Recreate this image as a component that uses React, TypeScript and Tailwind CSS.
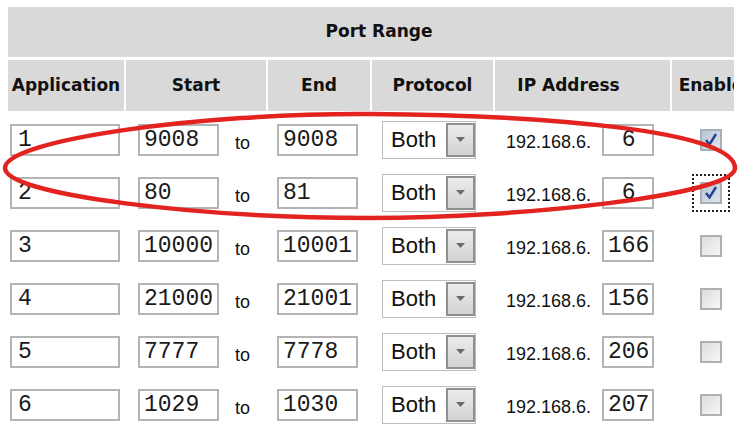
import React from 'react'

type Row = {
  app: string
  start: string
  end: string
  ip: string
  enabled?: boolean
  focused?: boolean
}

const rows: Row[] = [
  { app: '1', start: '9008', end: '9008', ip: ' 6', enabled: true },
  { app: '2', start: '80', end: '81', ip: ' 6', enabled: true, focused: true },
  { app: '3', start: '10000', end: '10001', ip: '166' },
  { app: '4', start: '21000', end: '21001', ip: '156' },
  { app: '5', start: '7777', end: '7778', ip: '206' },
  { app: '6', start: '1029', end: '1030', ip: '207' },
]

const headCell =
  "mt-[3px] flex h-[51px] items-center justify-center bg-[#d9d9da] text-[17px] font-bold text-[#111] font-['DejaVu_Sans',sans-serif]"

const field =
  "h-[32px] border-2 border-[#b4b4b4] bg-white pl-[4px] text-[23px] leading-none text-[#1a1a1a] outline-none font-['Liberation_Mono',monospace] whitespace-pre"

function Select() {
  return (
    <div className="flex h-[38px] w-[94px] items-stretch border border-[#bdbdbd] bg-white">
      <span className="flex flex-1 items-center pl-[8px] text-[22px] text-[#111] font-['Liberation_Sans',Arial,sans-serif]">
        Both
      </span>
      <span className="my-[1px] flex w-[29px] items-center justify-center border-2 border-[#8f8f8f] bg-gradient-to-b from-[#ececec] to-[#d2d2d2]">
        <svg width="11" height="7" viewBox="0 0 11 7">
          <path d="M1 1 L10 1 L5.5 6 Z" fill="#6b6b6b" />
        </svg>
      </span>
    </div>
  )
}

function Check({ on, focused }: { on?: boolean; focused?: boolean }) {
  return (
    <span
      className={
        focused
          ? 'flex h-[38px] w-[38px] items-center justify-center border-2 border-dotted border-[#222]'
          : 'flex h-[38px] w-[38px] items-center justify-center'
      }
    >
      <span
        role="checkbox"
        aria-checked={on ? 'true' : 'false'}
        className={
          on
            ? 'flex h-[22px] w-[22px] items-center justify-center border-2 border-[#a9afb8] bg-gradient-to-br from-[#b9c6d6] to-[#dde5ee]'
            : 'flex h-[22px] w-[22px] items-center justify-center border-2 border-[#b0b0b0] bg-gradient-to-br from-[#dcdcdc] to-[#f7f7f7]'
        }
      >
        {on && (
          <svg width="16" height="16" viewBox="0 0 16 16">
            <path d="M3 8 L6.5 12.5 L13 2" fill="none" stroke="#23408e" strokeWidth="2.4" />
          </svg>
        )}
      </span>
    </span>
  )
}

export default function App() {
  return (
    <div className="relative h-[437px] w-[742px] overflow-hidden bg-white">
      <div className="ml-[8px] mt-[7px] w-[726px] overflow-hidden">
        <div className="grid w-[742px] grid-cols-[116px_140px_102px_121px_175px_78px] gap-x-[2px]">
          <div className="col-span-6 flex h-[50px] items-center justify-center bg-[#d9d9da] text-[17px] font-bold text-[#111] font-['DejaVu_Sans',sans-serif]">
            Port Range
          </div>

          <div className={headCell}>Application</div>
          <div className={headCell}>Start</div>
          <div className={headCell}>End</div>
          <div className={headCell}>Protocol</div>
          <div className={`${headCell} pr-[28px]`}>IP Address</div>
          <div className={headCell}>Enable</div>

          {rows.map((r, i) => (
            <React.Fragment key={r.app}>
              <div className={i === 0 ? 'mt-[2px] flex h-[53px] items-center pl-[2px]' : 'flex h-[53px] items-center pl-[2px]'}>
                <input readOnly value={r.app} className={`${field} w-[110px] pl-[6px]`} />
              </div>
              <div className={i === 0 ? 'mt-[2px] flex h-[53px] items-center pl-[12px]' : 'flex h-[53px] items-center pl-[12px]'}>
                <input readOnly value={r.start} className={`${field} w-[81px]`} />
                <span className="ml-[16px] pt-[7px] text-[18px] text-[#111] font-['Liberation_Sans',Arial,sans-serif]">to</span>
              </div>
              <div className={i === 0 ? 'mt-[2px] flex h-[53px] items-center pl-[9px]' : 'flex h-[53px] items-center pl-[9px]'}>
                <input readOnly value={r.end} className={`${field} w-[81px]`} />
              </div>
              <div className={i === 0 ? 'mt-[2px] flex h-[53px] items-center pl-[10px]' : 'flex h-[53px] items-center pl-[10px]'}>
                <Select />
              </div>
              <div className={i === 0 ? 'mt-[2px] flex h-[53px] items-center pl-[11px]' : 'flex h-[53px] items-center pl-[11px]'}>
                <span className="w-[96px] pt-[6px] text-[18px] text-[#111] font-['Liberation_Sans',Arial,sans-serif]">
                  192.168.6.
                </span>
                <input readOnly value={r.ip} className={`${field} w-[52px] pl-[3px]`} />
              </div>
              <div className={i === 0 ? 'mt-[2px] flex h-[53px] items-center pl-[20px]' : 'flex h-[53px] items-center pl-[20px]'}>
                <Check on={r.enabled} focused={r.focused} />
              </div>
            </React.Fragment>
          ))}
        </div>
      </div>

      <svg className="pointer-events-none absolute left-0 top-0" width="742" height="437" viewBox="0 0 742 437">
        <path
          d="M5 168 C5 140 200 113 370 114 C540 115 735 130 735 168 C735 195 520 218 370 218 C200 218 5 195 5 168 Z"
          fill="none"
          stroke="#e2231f"
          strokeWidth="4.5"
        />
      </svg>
    </div>
  )
}
